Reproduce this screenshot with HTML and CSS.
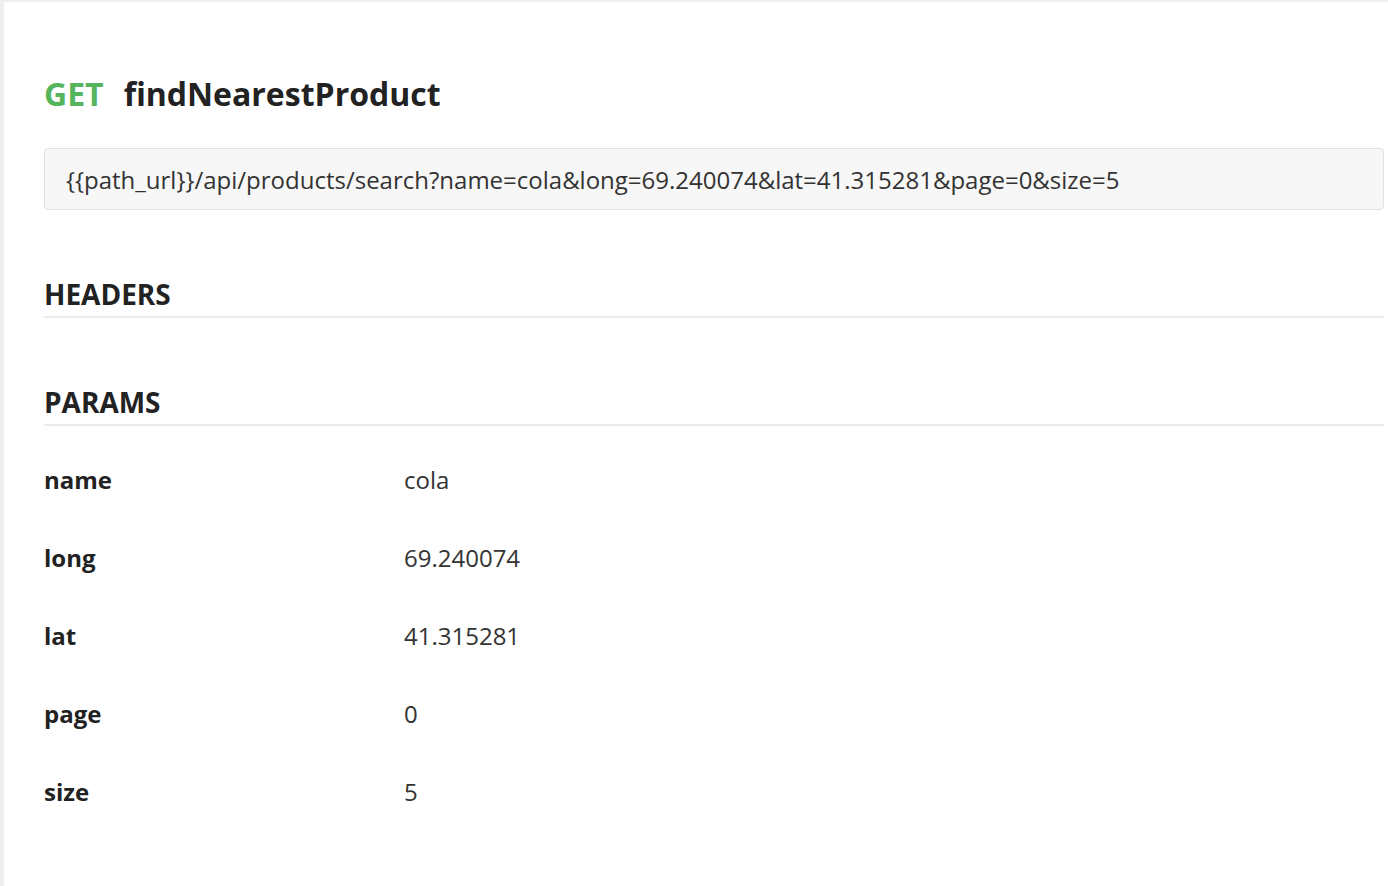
FILE: index.html
```html
<!DOCTYPE html>
<html lang="en">
<head>
<meta charset="utf-8">
<title>findNearestProduct</title>
<link rel="stylesheet" href="styles.css">
</head>
<body>
<main class="page">
  <h1 class="title"><span class="method">GET</span><span class="name">findNearestProduct</span></h1>
  <div class="url">{{path_url}}/api/products/search?name=cola&amp;long=69.240074&amp;lat=41.315281&amp;page=0&amp;size=5</div>
  <h2 class="section">HEADERS</h2>
  <h2 class="section">PARAMS</h2>
  <div class="params">
    <div class="row"><div class="key">name</div><div class="val">cola</div></div>
    <div class="row"><div class="key">long</div><div class="val">69.240074</div></div>
    <div class="row"><div class="key">lat</div><div class="val">41.315281</div></div>
    <div class="row"><div class="key">page</div><div class="val">0</div></div>
    <div class="row"><div class="key">size</div><div class="val">5</div></div>
  </div>
</main>
</body>
</html>
```

FILE: styles.css
```css
html, body {
  margin: 0;
  padding: 0;
  background: #efefef;
}
body {
  font-family: "Open Sans", "Liberation Sans", sans-serif;
  color: #222;
}
.page {
  box-sizing: border-box;
  margin: 2px 0 0 4px;
  background: #fff;
  padding: 70px 4px 40px 40px;
  min-height: calc(100vh - 2px);
}
.title {
  margin: 0 0 32px 0;
  font-size: 32px;
  line-height: 44px;
  font-weight: 700;
  color: #222;
}
.method {
  color: #55b55d;
  margin-right: 20px;
}
.url {
  height: 59px;
  padding: 1px 21px 0 21px;
  line-height: 60px;
  background: #f7f7f7;
  border: 1px solid #e2e2e2;
  border-radius: 4px;
  font-size: 24px;
  color: #333;
  white-space: nowrap;
  overflow: hidden;
}
.section {
  margin: 66px 0 0 0;
  font-size: 28px;
  line-height: 36px;
  font-weight: 700;
  color: #222;
  padding-bottom: 4px;
  border-bottom: 2px solid #ebebeb;
}
.params {
  margin-top: 15px;
}
.row {
  display: flex;
  padding: 24px 0;
  font-size: 24px;
  line-height: 30px;
}
.key {
  width: 360px;
  font-weight: 700;
  color: #222;
}
.val {
  color: #333;
}
```
